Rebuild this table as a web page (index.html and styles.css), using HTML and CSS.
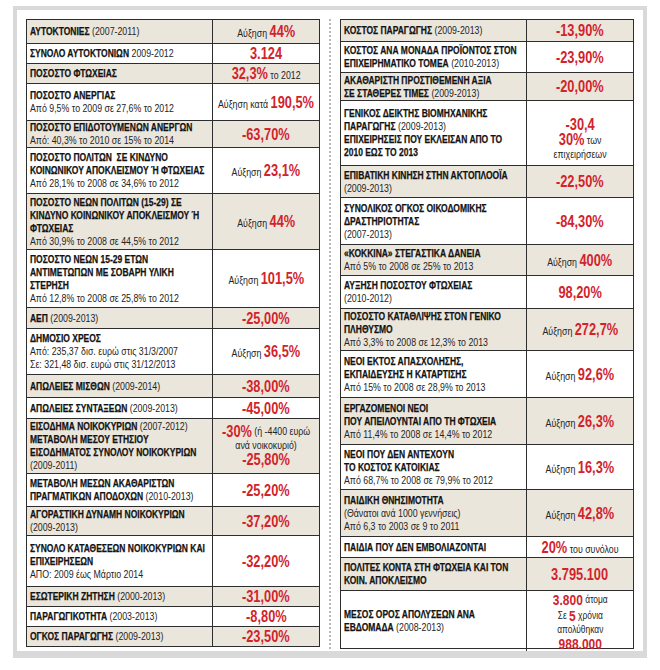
FILE: index.html
```html
<!DOCTYPE html>
<html lang="el">
<head>
<meta charset="utf-8">
<title>Πίνακας</title>
<link rel="stylesheet" href="styles.css">
</head>
<body>
<div class="frame">
  <div class="tbl">
    <div class="row h23"><div class="lab"><p><b>ΑΥΤΟΚΤΟΝΙΕΣ</b> (2007-2011)</p></div><div class="val"><p>Αύξηση <span class="r">44%</span></p></div></div>
    <div class="row h20"><div class="lab"><p><b>ΣΥΝΟΛΟ ΑΥΤΟΚΤΟΝΙΩΝ</b> 2009-2012</p></div><div class="val"><p><span class="r">3.124</span></p></div></div>
    <div class="row h20"><div class="lab"><p><b>ΠΟΣΟΣΤΟ ΦΤΩΧΕΙΑΣ</b></p></div><div class="val"><p><span class="r">32,3%</span> το 2012</p></div></div>
    <div class="row h37"><div class="lab"><p><b>ΠΟΣΟΣΤΟ ΑΝΕΡΓΙΑΣ</b><br>Από 9,5% το 2009 σε 27,6% το 2012</p></div><div class="val"><p>Αύξηση κατά <span class="r">190,5%</span></p></div></div>
    <div class="row h27"><div class="lab"><p><b>ΠΟΣΟΣΤΟ ΕΠΙΔΟΤΟΥΜΕΝΩΝ ΑΝΕΡΓΩΝ</b><br>Από: 40,3% το 2010 σε 15% το 2014</p></div><div class="val"><p><span class="r">-63,70%</span></p></div></div>
    <div class="row h46"><div class="lab"><p><b>ΠΟΣΟΣΤΟ ΠΟΛΙΤΩΝ&nbsp; ΣΕ ΚΙΝΔΥΝΟ<br>ΚΟΙΝΩΝΙΚΟΥ ΑΠΟΚΛΕΙΣΜΟΥ Ή ΦΤΩΧΕΙΑΣ</b><br>Από 28,1% το 2008 σε 34,6% το 2012</p></div><div class="val"><p>Αύξηση <span class="r">23,1%</span></p></div></div>
    <div class="row h56"><div class="lab"><p><b>ΠΟΣΟΣΤΟ ΝΕΩΝ ΠΟΛΙΤΩΝ (15-29) ΣΕ<br>ΚΙΝΔΥΝΟ ΚΟΙΝΩΝΙΚΟΥ ΑΠΟΚΛΕΙΣΜΟΥ Ή<br>ΦΤΩΧΕΙΑΣ</b><br>Από 30,9% το 2008 σε 44,5% το 2012</p></div><div class="val"><p>Αύξηση <span class="r">44%</span></p></div></div>
    <div class="row h58"><div class="lab"><p><b>ΠΟΣΟΣΤΟ ΝΕΩΝ 15-29 ΕΤΩΝ<br>ΑΝΤΙΜΕΤΩΠΩΝ ΜΕ ΣΟΒΑΡΗ ΥΛΙΚΗ<br>ΣΤΕΡΗΣΗ</b><br>Από 12,8% το 2008 σε 25,8% το 2012</p></div><div class="val"><p>Αύξηση <span class="r">101,5%</span></p></div></div>
    <div class="row h21"><div class="lab"><p><b>ΑΕΠ</b> (2009-2013)</p></div><div class="val"><p><span class="r">-25,00%</span></p></div></div>
    <div class="row h46"><div class="lab"><p><b>ΔΗΜΟΣΙΟ ΧΡΕΟΣ</b><br>Από: 235,37 δισ. ευρώ στις 31/3/2007<br>Σε: 321,48 δισ. ευρώ στις 31/12/2013</p></div><div class="val"><p>Αύξηση <span class="r">36,5%</span></p></div></div>
    <div class="row h23"><div class="lab"><p><b>ΑΠΩΛΕΙΕΣ ΜΙΣΘΩΝ</b> (2009-2014)</p></div><div class="val"><p><span class="r">-38,00%</span></p></div></div>
    <div class="row h21"><div class="lab"><p><b>ΑΠΩΛΕΙΕΣ ΣΥΝΤΑΞΕΩΝ</b> (2009-2013)</p></div><div class="val"><p><span class="r">-45,00%</span></p></div></div>
    <div class="row h55"><div class="lab"><p><b>ΕΙΣΟΔΗΜΑ ΝΟΙΚΟΚΥΡΙΩΝ</b> (2007-2012)<br><b>ΜΕΤΑΒΟΛΗ ΜΕΣΟΥ ΕΤΗΣΙΟΥ<br>ΕΙΣΟΔΗΜΑΤΟΣ ΣΥΝΟΛΟΥ ΝΟΙΚΟΚΥΡΙΩΝ</b><br>(2009-2011)</p></div><div class="val"><p class="stack"><span class="ln l15"><span class="r">-30%</span> (ή -4400 ευρώ</span><span class="ln l12">ανά νοικοκυριό)</span><span class="ln l17"><span class="r">-25,80%</span></span></p></div></div>
    <div class="row h33"><div class="lab"><p><b>ΜΕΤΑΒΟΛΗ ΜΕΣΩΝ ΑΚΑΘΑΡΙΣΤΩΝ<br>ΠΡΑΓΜΑΤΙΚΩΝ ΑΠΟΔΟΧΩΝ</b> (2010-2013)</p></div><div class="val"><p><span class="r">-25,20%</span></p></div></div>
    <div class="row h29"><div class="lab"><p><b>ΑΓΟΡΑΣΤΙΚΗ ΔΥΝΑΜΗ ΝΟΙΚΟΚΥΡΙΩΝ</b><br>(2009-2013)</p></div><div class="val"><p><span class="r">-37,20%</span></p></div></div>
    <div class="row h51"><div class="lab"><p><b>ΣΥΝΟΛΟ ΚΑΤΑΘΕΣΕΩΝ ΝΟΙΚΟΚΥΡΙΩΝ ΚΑΙ<br>ΕΠΙΧΕΙΡΗΣΕΩΝ</b><br>ΑΠΟ: 2009 έως Μάρτιο 2014</p></div><div class="val"><p><span class="r">-32,20%</span></p></div></div>
    <div class="row h20"><div class="lab"><p><b>ΕΣΩΤΕΡΙΚΗ ΖΗΤΗΣΗ</b> (2000-2013)</p></div><div class="val"><p><span class="r">-31,00%</span></p></div></div>
    <div class="row h20"><div class="lab"><p><b>ΠΑΡΑΓΩΓΙΚΟΤΗΤΑ</b> (2003-2013)</p></div><div class="val"><p><span class="r">-8,80%</span></p></div></div>
    <div class="row h20"><div class="lab"><p><b>ΟΓΚΟΣ ΠΑΡΑΓΩΓΗΣ</b> (2009-2013)</p></div><div class="val"><p><span class="r">-23,50%</span></p></div></div>
  </div>
  <div class="sep"></div>
  <div class="tbl">
    <div class="row h21"><div class="lab"><p><b>ΚΟΣΤΟΣ ΠΑΡΑΓΩΓΗΣ</b> (2009-2013)</p></div><div class="val"><p><span class="r">-13,90%</span></p></div></div>
    <div class="row h31"><div class="lab"><p><b>ΚΟΣΤΟΣ ΑΝΑ ΜΟΝΑΔΑ ΠΡΟΪΟΝΤΟΣ ΣΤΟΝ<br>ΕΠΙΧΕΙΡΗΜΑΤΙΚΟ ΤΟΜΕΑ</b> (2010-2013)</p></div><div class="val"><p><span class="r">-23,90%</span></p></div></div>
    <div class="row h28"><div class="lab"><p><b>ΑΚΑΘΑΡΙΣΤΗ ΠΡΟΣΤΙΘΕΜΕΝΗ ΑΞΙΑ<br>ΣΕ ΣΤΑΘΕΡΕΣ ΤΙΜΕΣ</b> (2009-2013)</p></div><div class="val"><p><span class="r">-20,00%</span></p></div></div>
    <div class="row h65"><div class="lab"><p><b>ΓΕΝΙΚΟΣ ΔΕΙΚΤΗΣ ΒΙΟΜΗΧΑΝΙΚΗΣ<br>ΠΑΡΑΓΩΓΗΣ</b> (2009-2013)<br><b>ΕΠΙΧΕΙΡΗΣΕΙΣ ΠΟΥ ΕΚΛΕΙΣΑΝ ΑΠΟ ΤΟ<br>2010 ΕΩΣ ΤΟ 2013</b></p></div><div class="val low"><p class="stack"><span class="ln l15"><span class="r">-30,4</span></span><span class="ln l15"><span class="r">30%</span> των</span><span class="ln l13">επιχειρήσεων</span></p></div></div>
    <div class="row h32"><div class="lab"><p><b>ΕΠΙΒΑΤΙΚΗ ΚΙΝΗΣΗ ΣΤΗΝ ΑΚΤΟΠΛΟΟΪΑ</b><br>(2009-2013)</p></div><div class="val"><p><span class="r">-22,50%</span></p></div></div>
    <div class="row h47"><div class="lab"><p><b>ΣΥΝΟΛΙΚΟΣ ΟΓΚΟΣ ΟΙΚΟΔΟΜΙΚΗΣ<br>ΔΡΑΣΤΗΡΙΟΤΗΤΑΣ</b><br>(2007-2013)</p></div><div class="val"><p><span class="r">-84,30%</span></p></div></div>
    <div class="row h31"><div class="lab"><p><b>«ΚΟΚΚΙΝΑ» ΣΤΕΓΑΣΤΙΚΑ ΔΑΝΕΙΑ</b><br>Από 5% το 2008 σε 25% το 2013</p></div><div class="val"><p>Αύξηση <span class="r">400%</span></p></div></div>
    <div class="row h33"><div class="lab"><p><b>ΑΥΞΗΣΗ ΠΟΣΟΣΤΟΥ ΦΤΩΧΕΙΑΣ</b><br>(2010-2012)</p></div><div class="val"><p><span class="r">98,20%</span></p></div></div>
    <div class="row h42"><div class="lab"><p><b>ΠΟΣΟΣΤΟ ΚΑΤΑΘΛΙΨΗΣ ΣΤΟΝ ΓΕΝΙΚΟ<br>ΠΛΗΘΥΣΜΟ</b><br>Από 3,3% το 2008 σε 12,3% το 2013</p></div><div class="val"><p>Αύξηση <span class="r">272,7%</span></p></div></div>
    <div class="row h47"><div class="lab"><p><b>ΝΕΟΙ ΕΚΤΟΣ ΑΠΑΣΧΟΛΗΣΗΣ,<br>ΕΚΠΑΙΔΕΥΣΗΣ Η ΚΑΤΑΡΤΙΣΗΣ</b><br>Από 15% το 2008 σε 28,9% το 2013</p></div><div class="val"><p>Αύξηση <span class="r">92,6%</span></p></div></div>
    <div class="row h47"><div class="lab"><p><b>ΕΡΓΑΖΟΜΕΝΟΙ ΝΕΟΙ<br>ΠΟΥ ΑΠΕΙΛΟΥΝΤΑΙ ΑΠΟ ΤΗ ΦΤΩΧΕΙΑ</b><br>Από 11,4% το 2008 σε 14,4% το 2012</p></div><div class="val"><p>Αύξηση <span class="r">26,3%</span></p></div></div>
    <div class="row h45"><div class="lab"><p><b>ΝΕΟΙ ΠΟΥ ΔΕΝ ΑΝΤΕΧΟΥΝ<br>ΤΟ ΚΟΣΤΟΣ ΚΑΤΟΙΚΙΑΣ</b><br>Από 68,7% το 2008 σε 79,9% το 2012</p></div><div class="val"><p>Αύξηση <span class="r">16,3%</span></p></div></div>
    <div class="row h47"><div class="lab"><p><b>ΠΑΙΔΙΚΗ ΘΝΗΣΙΜΟΤΗΤΑ</b><br>(Θάνατοι ανά 1000 γεννήσεις)<br>Από 6,3 το 2003 σε 9 το 2011</p></div><div class="val"><p>Αύξηση <span class="r">42,8%</span></p></div></div>
    <div class="row h21"><div class="lab"><p><b>ΠΑΙΔΙΑ ΠΟΥ ΔΕΝ ΕΜΒΟΛΙΑΖΟΝΤΑΙ</b></p></div><div class="val"><p><span class="r">20%</span> του συνόλου</p></div></div>
    <div class="row h33"><div class="lab"><p><b>ΠΟΛΙΤΕΣ ΚΟΝΤΑ ΣΤΗ ΦΤΩΧΕΙΑ ΚΑΙ ΤΟΝ<br>ΚΟΙΝ. ΑΠΟΚΛΕΙΣΜΟ</b></p></div><div class="val"><p><span class="r">3.795.100</span></p></div></div>
    <div class="row h58"><div class="lab"><p><b>ΜΕΣΟΣ ΟΡΟΣ ΑΠΟΛΥΣΕΩΝ ΑΝΑ<br>ΕΒΔΟΜΑΔΑ</b> (2008-2013)</p></div><div class="val"><p class="stack sm"><span class="ln l16"><span class="r">3.800</span> άτομα</span><span class="ln l16">Σε <span class="r">5</span> χρόνια</span><span class="ln l12">απολύθηκαν</span><span class="ln l16"><span class="r">988.000</span></span></p></div></div>
  </div>
</div>
</body>
</html>
```

FILE: styles.css
```css
html, body {
  margin: 0;
  padding: 0;
  background: #ffffff;
}

.frame {
  display: flex;
  align-items: flex-start;
  box-sizing: border-box;
  width: 634px;
  margin: 6px 0 0 13px;
  padding: 9px 9px 2px 9px;
  border: 4px solid #d9d9d9;
  border-bottom-width: 7px;
  background: #ffffff;
}

.sep {
  align-self: stretch;
  width: 0;
  margin: 0 9px;
  border-left: 2px dotted #b8b8b8;
}

.tbl {
  width: 294px;
  box-sizing: border-box;
  border: 1px solid #2d2d2d;
  font-family: "Liberation Sans", Arial, sans-serif;
  font-size: 11px;
  line-height: 13px;
  color: #242424;
}

.row {
  display: grid;
  grid-template-columns: 186px 1fr;
  box-sizing: border-box;
  border-top: 1px solid #2d2d2d;
  background: #ffffff;
}

.row:first-child {
  border-top: 0;
}

.row:nth-child(odd) {
  background: #ebe6dc;
}

.lab {
  display: flex;
  align-items: center;
  border-right: 1px solid #2d2d2d;
  padding: 0 2px 0 3px;
  white-space: nowrap;
  min-width: 0;
}

.lab p {
  flex: none;
  transform: scaleX(0.8);
  transform-origin: 0 50%;
}

.val {
  display: flex;
  align-items: center;
  justify-content: center;
  text-align: center;
  white-space: nowrap;
  min-width: 0;
}

.val p {
  flex: none;
  transform: scaleX(0.8);
  transform-origin: 50% 50%;
}

.val.low {
  padding-top: 12px;
}

p {
  margin: 0;
}

b {
  font-weight: 700;
  font-size: 10.6px;
  color: #121212;
  -webkit-text-stroke: 0.25px #121212;
}

.r {
  color: #d2232b;
  font-weight: 700;
  font-size: 16px;
  line-height: 17px;
}

.stack {
  display: flex;
  flex-direction: column;
  align-items: center;
}

.ln {
  display: flex;
  align-items: center;
  gap: 3px;
  line-height: 1;
}

.ln .r {
  line-height: 1;
}

.sm {
  font-size: 10.5px;
}

.sm .r {
  font-size: 15px;
}

.l11 { height: 11px; }
.l12 { height: 12px; }
.l13 { height: 13px; }
.l14 { height: 14px; }
.l15 { height: 15px; }
.l16 { height: 16px; }
.l17 { height: 17px; }

.h20 { height: 20px; }
.h21 { height: 21px; }
.h23 { height: 23px; }
.h27 { height: 27px; }
.h28 { height: 28px; }
.h29 { height: 29px; }
.h31 { height: 31px; }
.h32 { height: 32px; }
.h33 { height: 33px; }
.h37 { height: 37px; }
.h42 { height: 42px; }
.h45 { height: 45px; }
.h46 { height: 46px; }
.h47 { height: 47px; }
.h51 { height: 51px; }
.h55 { height: 55px; }
.h56 { height: 56px; }
.h58 { height: 58px; }
.h65 { height: 65px; }
```
